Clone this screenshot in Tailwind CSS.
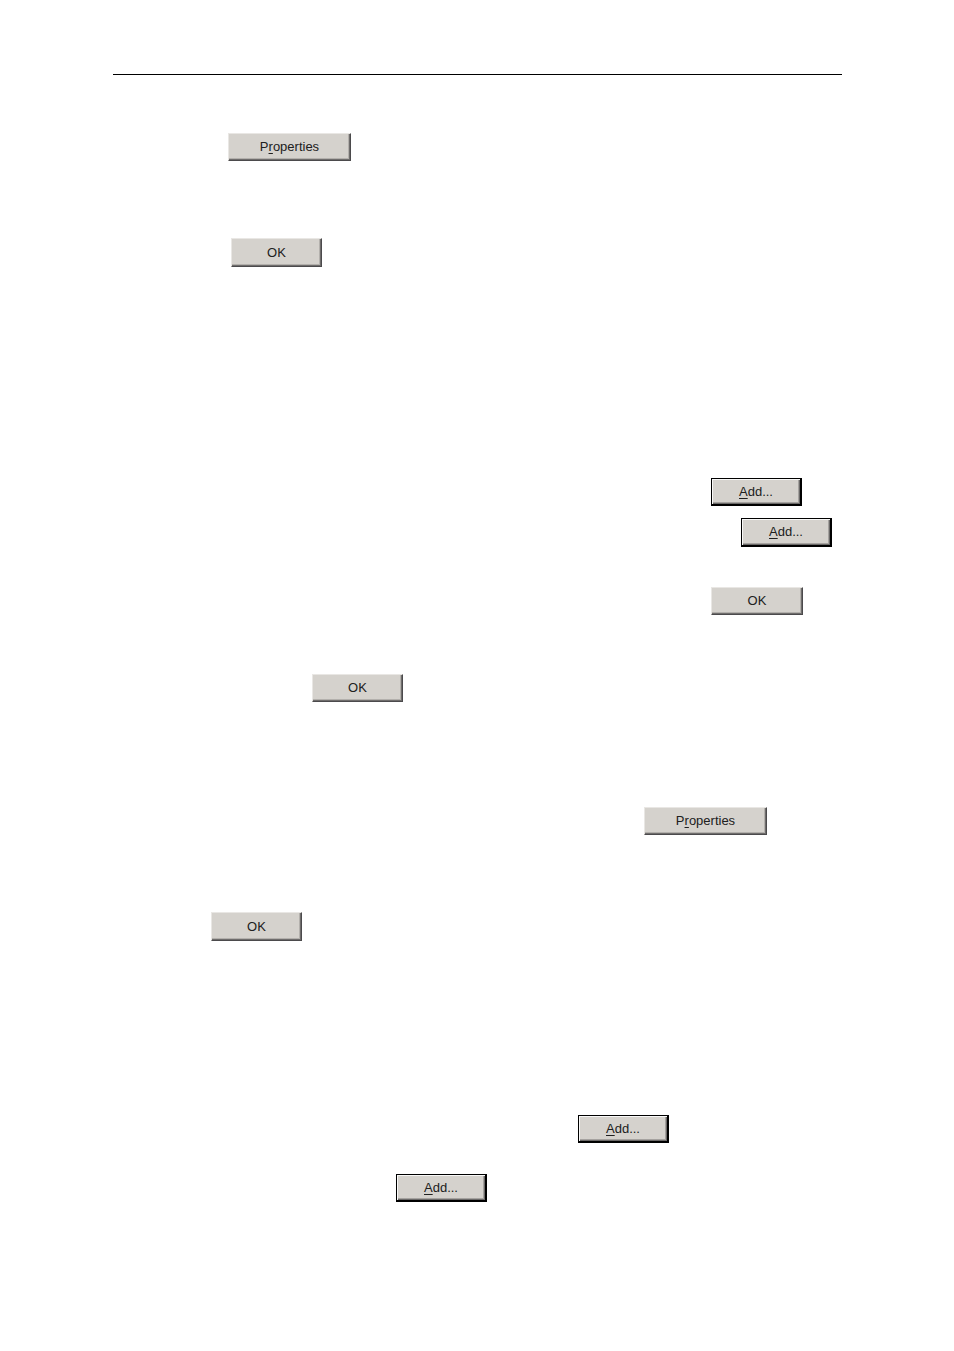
<!DOCTYPE html>
<html lang="en">
<head>
    <meta charset="UTF-8">
    <meta name="viewport" content="width=device-width, initial-scale=1.0">
    <title>Properties</title>
    <script src="https://cdn.jsdelivr.net/npm/@tailwindcss/browser@4"></script>
</head>
<body class="bg-white text-[13px] leading-4 text-[#202020] font-['Liberation_Sans',Arial,sans-serif]">
    <main class="flex flex-col items-start pt-[74px] pb-16 pl-[113px] pr-28">
        <hr class="w-full border-t border-black">

        <!-- Local group -->
        <button type="button" class="mt-[58px] ml-[115px] w-[123px] h-7 bg-[#d5d2cd] border border-t-[#e9e7e4] border-l-[#e9e7e4] border-r-[#4b4a4c] border-b-[#4b4a4c] shadow-[inset_-1px_-1px_0_#6f6d6c,inset_-2px_-2px_0_#b3b0ac]">P<u class="underline-offset-2">r</u>operties</button>
        <button type="button" class="mt-[77px] ml-[118px] w-[91px] h-[29px] bg-[#d5d2cd] border border-t-[#e9e7e4] border-l-[#e9e7e4] border-r-[#4b4a4c] border-b-[#4b4a4c] shadow-[inset_-1px_-1px_0_#6f6d6c,inset_-2px_-2px_0_#b3b0ac]">OK</button>

        <!-- Members -->
        <button type="button" class="mt-[211px] ml-[598px] w-[91px] h-7 bg-[#d5d2cd] border-t border-l border-r-2 border-b-2 border-black shadow-[inset_1px_1px_0_#f8f8f7,inset_-1px_-1px_0_#6b6968,inset_-2px_-2px_0_#a5a29f]"><u class="underline-offset-2">A</u>dd...</button>
        <button type="button" class="mt-3 ml-[628px] w-[91px] h-[29px] bg-[#d5d2cd] border-t border-l border-r-2 border-b-2 border-black shadow-[inset_1px_1px_0_#f8f8f7,inset_-1px_-1px_0_#6b6968,inset_-2px_-2px_0_#a5a29f]"><u class="underline-offset-2">A</u>dd...</button>
        <button type="button" class="mt-10 ml-[598px] w-[92px] h-7 bg-[#d5d2cd] border border-t-[#e9e7e4] border-l-[#e9e7e4] border-r-[#4b4a4c] border-b-[#4b4a4c] shadow-[inset_-1px_-1px_0_#6f6d6c,inset_-2px_-2px_0_#b3b0ac]">OK</button>
        <button type="button" class="mt-[59px] ml-[199px] w-[91px] h-7 bg-[#d5d2cd] border border-t-[#e9e7e4] border-l-[#e9e7e4] border-r-[#4b4a4c] border-b-[#4b4a4c] shadow-[inset_-1px_-1px_0_#6f6d6c,inset_-2px_-2px_0_#b3b0ac]">OK</button>

        <!-- Second group -->
        <button type="button" class="mt-[105px] ml-[531px] w-[123px] h-7 bg-[#d5d2cd] border border-t-[#e9e7e4] border-l-[#e9e7e4] border-r-[#4b4a4c] border-b-[#4b4a4c] shadow-[inset_-1px_-1px_0_#6f6d6c,inset_-2px_-2px_0_#b3b0ac]">P<u class="underline-offset-2">r</u>operties</button>
        <button type="button" class="mt-[77px] ml-[98px] w-[91px] h-[29px] bg-[#d5d2cd] border border-t-[#e9e7e4] border-l-[#e9e7e4] border-r-[#4b4a4c] border-b-[#4b4a4c] shadow-[inset_-1px_-1px_0_#6f6d6c,inset_-2px_-2px_0_#b3b0ac]">OK</button>
        <button type="button" class="mt-[174px] ml-[465px] w-[91px] h-7 bg-[#d5d2cd] border-t border-l border-r-2 border-b-2 border-black shadow-[inset_1px_1px_0_#f8f8f7,inset_-1px_-1px_0_#6b6968,inset_-2px_-2px_0_#a5a29f]"><u class="underline-offset-2">A</u>dd...</button>
        <button type="button" class="mt-[31px] ml-[283px] w-[91px] h-7 bg-[#d5d2cd] border-t border-l border-r-2 border-b-2 border-black shadow-[inset_1px_1px_0_#f8f8f7,inset_-1px_-1px_0_#6b6968,inset_-2px_-2px_0_#a5a29f]"><u class="underline-offset-2">A</u>dd...</button>
    </main>
</body>
</html>
